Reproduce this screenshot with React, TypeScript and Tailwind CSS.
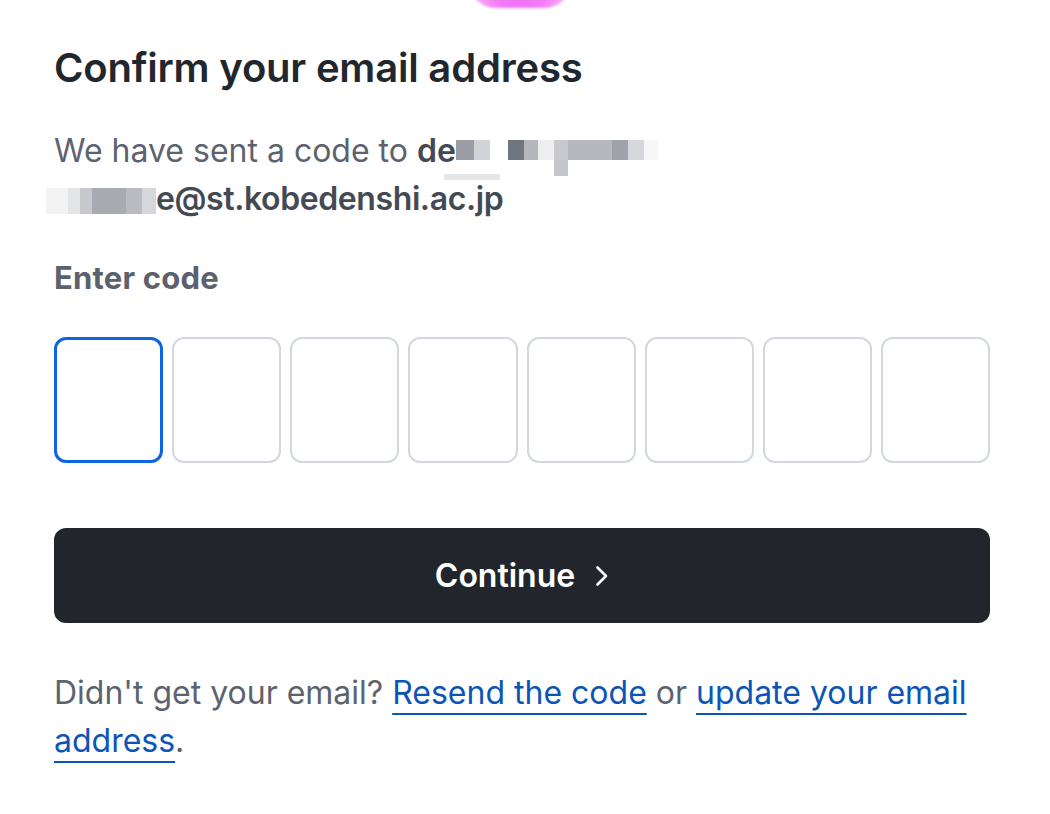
import React from "react";

const boxes = [0, 1, 2, 3, 4, 5, 6, 7];

function Blur({ w, tone, drop }: { w: number; tone: string; drop?: boolean }) {
  return (
    <span className="relative inline-block h-[20px]" style={{ width: w }}>
      <span className={`absolute inset-0 ${tone}`} />
      {drop && <span className="absolute left-0 top-[20px] h-[16px] w-full bg-[#c4c6cb]" />}
    </span>
  );
}

export default function App() {
  return (
    <div
      className="relative min-h-[814px] w-full overflow-hidden bg-white pl-[54px] pr-[60px] pt-[44px]"
      style={{ fontFamily: "Inter, 'Noto Sans', sans-serif" }}
    >
      {/* logo peeking from the top */}
      <div className="absolute left-[470px] top-[-42px] h-[50px] w-[100px] rounded-full bg-[radial-gradient(circle_at_50%_30%,#e25cf0,#f27bf5_60%,#fbc8fb)] blur-[1px]" />

      <h1 className="text-[40px] font-semibold leading-[48px] tracking-[-0.2px] text-[#22272e]">
        Confirm your email address
      </h1>

      <p className="mt-[35px] text-[32px] leading-[48px] text-[#5d636e]">
        We have sent a code to{" "}
        <span className="font-semibold text-[#444a54]">de</span>
        <span className="relative inline-flex items-start align-[2px]">
          <Blur w={18} tone="bg-[#9b9ea5]" />
          <Blur w={16} tone="bg-[#d2d3d6]" />
          <Blur w={18} tone="bg-white" />
          <Blur w={16} tone="bg-[#71757d]" />
          <Blur w={14} tone="bg-[#b4b6bb]" />
          <Blur w={16} tone="bg-[#eeeef0]" />
          <Blur w={14} tone="bg-[#c8c9cd]" drop />
          <Blur w={44} tone="bg-[#b6b8bd]" />
          <Blur w={16} tone="bg-[#9fa2a8]" />
          <Blur w={16} tone="bg-[#d6d7da]" />
          <Blur w={14} tone="bg-[#f7f7f8]" />
          <span className="absolute left-[-12px] top-[34px] h-[6px] w-[56px] bg-[#e6e7e9]" />
        </span>
        <br />
        <span className="-ml-[8px] inline-flex align-[-4px]">
          <span className="inline-block h-[26px] w-[22px] bg-[#f3f3f4]" />
          <span className="inline-block h-[26px] w-[12px] bg-[#e3e4e6]" />
          <span className="inline-block h-[26px] w-[12px] bg-[#c6c8cc]" />
          <span className="inline-block h-[26px] w-[34px] bg-[#a8abb1]" />
          <span className="inline-block h-[26px] w-[16px] bg-[#b9bbc0]" />
          <span className="inline-block h-[26px] w-[14px] bg-[#d6d7da]" />
        </span>
        <span className="font-semibold tracking-[-0.4px] text-[#444a54]">e@st.kobedenshi.ac.jp</span>
      </p>

      <p className="mt-[37px] text-[31px] font-bold leading-[36px] tracking-[0.2px] text-[#5b626d]">Enter code</p>

      <div className="mt-[41px] grid grid-cols-8 gap-[9px]">
        {boxes.map((i) => (
          <div
            key={i}
            className={
              i === 0
                ? "h-[126px] rounded-[12px] border-[3px] border-[#0c66e4] bg-white"
                : "h-[126px] rounded-[12px] border-2 border-[#d3d8df] bg-white"
            }
          />
        ))}
      </div>

      <button className="mt-[65px] flex h-[95px] w-full items-center justify-center gap-[20px] rounded-[12px] bg-[#22252b] text-[32px] font-semibold text-white">
        <span>Continue</span>
        <svg width="14" height="22" viewBox="0 0 14 22" fill="none">
          <path d="M2.5 2.5 11 11l-8.5 8.5" stroke="white" strokeWidth="2.6" strokeLinecap="round" strokeLinejoin="round" />
        </svg>
      </button>

      <p className="mt-[46px] text-[32px] leading-[48px] text-[#5d636e]">
        Didn't get your email?{" "}
        <a href="#" className="text-[#0c55b8] underline decoration-2 underline-offset-[9px]">
          Resend the code
        </a>{" "}
        or{" "}
        <a href="#" className="text-[#0c55b8] underline decoration-2 underline-offset-[9px]">
          update your email address
        </a>
        .
      </p>
    </div>
  );
}
